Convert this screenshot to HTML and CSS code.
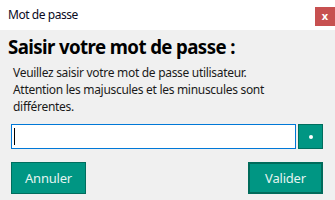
FILE: index.html
```html
<!DOCTYPE html>
<html lang="fr">
<head>
<meta charset="utf-8">
<title>Mot de passe</title>
<link rel="stylesheet" href="styles.css">
</head>
<body>
<div class="window">
  <div class="titlebar">
    <span class="title">Mot de passe</span>
    <span class="close">x</span>
  </div>
  <div class="content">
    <h1 class="heading">Saisir votre mot de passe :</h1>
    <p class="message">Veuillez saisir votre mot de passe utilisateur.<br>Attention les majuscules et les minuscules sont<br>différentes.</p>
    <div class="input-row">
      <div class="field"><span class="caret"></span></div>
      <div class="reveal"><span class="dot"></span></div>
    </div>
    <div class="actions">
      <div class="btn">Annuler</div>
      <div class="btn btn-default">Valider</div>
    </div>
  </div>
</div>
</body>
</html>
```

FILE: styles.css
```css
html, body {
  margin: 0;
  padding: 0;
}
body {
  width: 335px;
  height: 200px;
  background: #f0f0f0;
  font-family: "Noto Sans", "Open Sans", sans-serif;
  color: #000;
  overflow: hidden;
}
.titlebar {
  height: 30px;
  background: #ffffff;
  display: flex;
  justify-content: space-between;
  align-items: flex-start;
}
.title {
  font-size: 12px;
  line-height: 30px;
  padding-left: 8px;
  letter-spacing: -0.45px;
  color: #0a0a1e;
}
.close {
  margin-top: 7px;
  width: 20px;
  height: 19px;
  background: #c75050;
  color: #fff;
  font-size: 11px;
  font-weight: bold;
  line-height: 18px;
  text-align: center;
}
.content {
  padding: 0 12px 0 11px;
}
.heading {
  margin: 5px 0 0 -3px;
  font-size: 18.67px;
  line-height: 24px;
  font-weight: bold;
  letter-spacing: -0.6px;
  white-space: nowrap;
}
.message {
  margin: 5px 0 0 2px;
  font-size: 12px;
  line-height: 17px;
  letter-spacing: -0.3px;
  color: #1a1a1a;
  white-space: nowrap;
}
.input-row {
  margin-top: 9px;
  display: flex;
  gap: 2px;
  height: 25px;
}
.field {
  width: 286px;
  box-sizing: border-box;
  border: 1px solid #0078d7;
  background: #fff;
  padding: 3px 0 0 2px;
}
.caret {
  display: block;
  width: 1px;
  height: 17px;
  background: #000;
}
.reveal {
  width: 25px;
  box-sizing: border-box;
  border: 1px solid #006e5e;
  background: #009683;
  display: flex;
  align-items: center;
  justify-content: center;
}
.dot {
  width: 4px;
  height: 4px;
  border-radius: 50%;
  background: #fff;
}
.actions {
  margin-top: 13px;
  display: flex;
  justify-content: space-between;
}
.btn {
  width: 75px;
  height: 32px;
  box-sizing: border-box;
  border: 1px solid #006e5e;
  background: #009683;
  color: #e4f4f1;
  font-size: 13px;
  letter-spacing: -0.2px;
  display: flex;
  align-items: center;
  justify-content: center;
}
.btn-default {
  border: 2px solid #006b5b;
}
```
